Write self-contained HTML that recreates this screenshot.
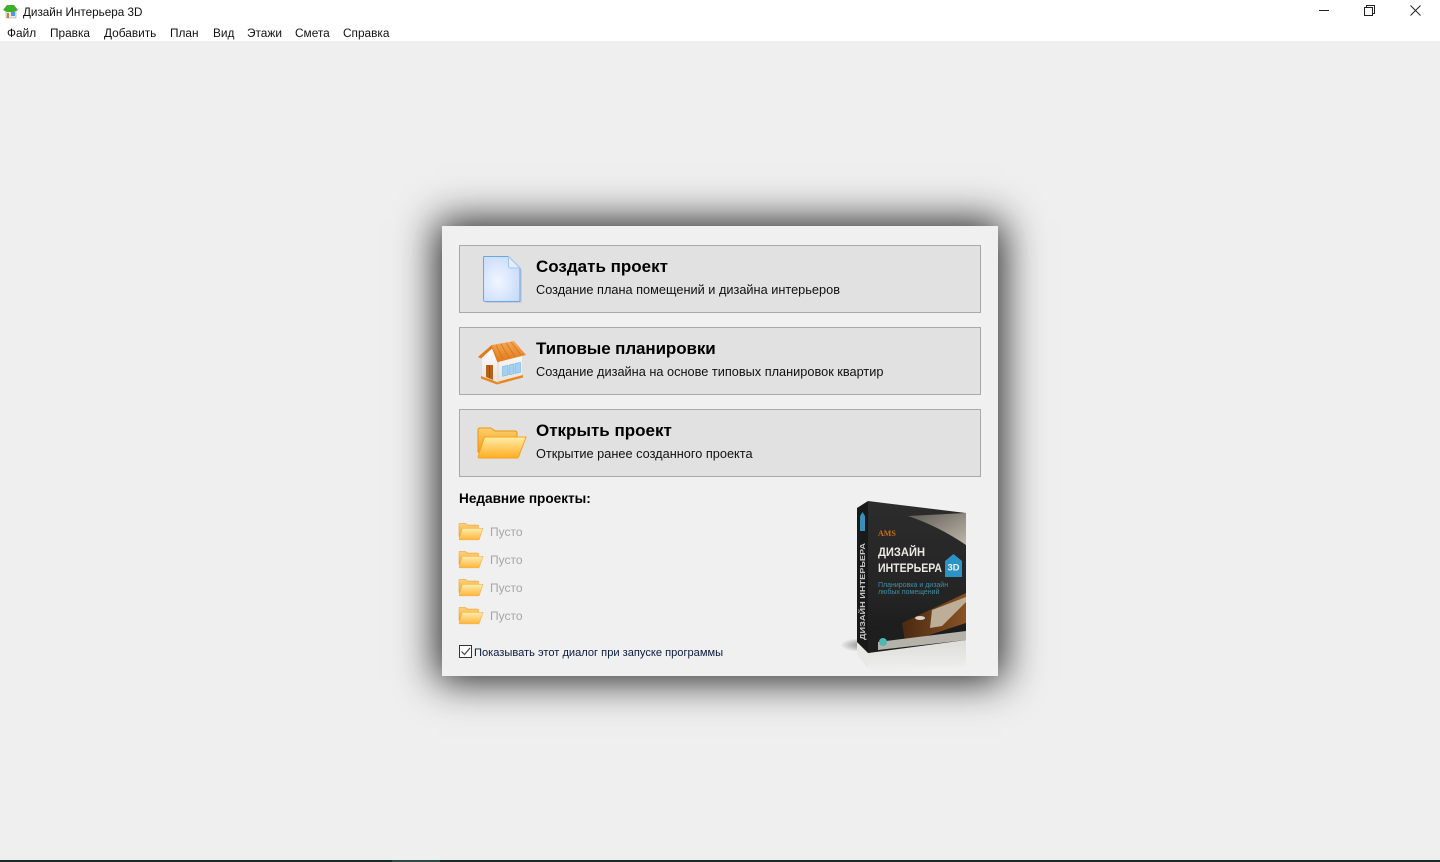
<!DOCTYPE html>
<html lang="ru"><head><meta charset="utf-8"><title>Дизайн Интерьера 3D</title>
<style>
html,body{margin:0;padding:0;width:1440px;height:862px;overflow:hidden;background:#efefef;font-family:"Liberation Sans",sans-serif;color:#000}
.t{position:absolute;white-space:nowrap;line-height:16px}
#top{position:absolute;left:0;top:0;width:1440px;height:41px;background:#fff}
#dlg{position:absolute;left:442px;top:226px;width:556px;height:450px;background:#f0f0f0;box-shadow:0 0 38px 5px rgba(0,0,0,.85)}
.btn{position:absolute;left:459px;width:520px;height:66px;background:#e1e1e1;border:1px solid #a9a9a9}
.h{font-weight:bold;font-size:17px;left:536px}
.s{font-size:12.75px;left:536px;color:#111}
.m{font-size:11.85px;top:25px;color:#111}
.e{font-size:12px;left:490px;color:#a5a5a5}
svg{position:absolute;left:0;top:0}
#bar{position:absolute;left:0;top:860px;width:1440px;height:2px;background:#1a2a26}
#seg{position:absolute;left:392px;top:860px;width:48px;height:2px;background:#2f4a46}
</style></head><body>
<div id="top"></div>
<div class="t" style="left:23px;top:5px;font-size:11.7px;color:#111">Дизайн Интерьера 3D</div>
<div class="t m" style="left:7px">Файл</div>
<div class="t m" style="left:50px">Правка</div>
<div class="t m" style="left:104px">Добавить</div>
<div class="t m" style="left:170px">План</div>
<div class="t m" style="left:213px">Вид</div>
<div class="t m" style="left:247px">Этажи</div>
<div class="t m" style="left:295px">Смета</div>
<div class="t m" style="left:343px">Справка</div>
<div id="dlg"></div>
<div class="btn" style="top:245px"></div>
<div class="btn" style="top:327px"></div>
<div class="btn" style="top:409px"></div>
<div class="t h" style="top:259px">Создать проект</div>
<div class="t s" style="top:282px">Создание плана помещений и дизайна интерьеров</div>
<div class="t h" style="top:341px;letter-spacing:-.1px">Типовые планировки</div>
<div class="t s" style="top:364px">Создание дизайна на основе типовых планировок квартир</div>
<div class="t h" style="top:423px">Открыть проект</div>
<div class="t s" style="top:446px">Открытие ранее созданного проекта</div>
<div class="t" style="left:459px;top:491px;font-size:13.6px;font-weight:bold">Недавние проекты:</div>
<div class="t e" style="top:524px">Пусто</div>
<div class="t e" style="top:552px">Пусто</div>
<div class="t e" style="top:580px">Пусто</div>
<div class="t e" style="top:608px">Пусто</div>
<div class="t" style="left:474px;top:645px;font-size:11.1px;color:#0b1a3c">Показывать этот диалог при запуске программы</div>
<svg width="1440" height="862" viewBox="0 0 1440 862">
<defs>
<radialGradient id="doc" cx=".4" cy=".55" r=".7"><stop offset="0" stop-color="#f2f6ff"/><stop offset="1" stop-color="#c4d9fb"/></radialGradient>
<linearGradient id="roof" x1="0" y1="0" x2="0" y2="1"><stop offset="0" stop-color="#f4a95a"/><stop offset="1" stop-color="#e27a18"/></linearGradient>
<linearGradient id="wall" x1="0" y1="0" x2="0" y2="1"><stop offset="0" stop-color="#ffffff"/><stop offset="1" stop-color="#e6e2dc"/></linearGradient>
<linearGradient id="fb" x1="0" y1="0" x2="0" y2="1"><stop offset="0" stop-color="#ffcf6e"/><stop offset="1" stop-color="#f59c14"/></linearGradient>
<linearGradient id="ff" x1="0" y1="0" x2="0" y2="1"><stop offset="0" stop-color="#ffeea8"/><stop offset="1" stop-color="#ffad22"/></linearGradient>
<linearGradient id="boxf" x1="0" y1="0" x2="0" y2="1"><stop offset="0" stop-color="#2c2c2c"/><stop offset=".62" stop-color="#242424"/><stop offset="1" stop-color="#181818"/></linearGradient>
<linearGradient id="refl" x1="0" y1="0" x2="0" y2="1"><stop offset="0" stop-color="#dcdcd8"/><stop offset="1" stop-color="#f0f0f0"/></linearGradient>
<linearGradient id="tbl" x1="0" y1="0" x2="1" y2="0"><stop offset="0" stop-color="#4a2a10"/><stop offset="1" stop-color="#8a5224"/></linearGradient>
<linearGradient id="ceil" x1="0" y1="0" x2="1" y2="1"><stop offset="0" stop-color="#5e5a54"/><stop offset="1" stop-color="#bfb8aa"/></linearGradient>
<radialGradient id="sh" cx=".8" cy=".5" r=".6"><stop offset="0" stop-color="#555" stop-opacity=".7"/><stop offset="1" stop-color="#555" stop-opacity="0"/></radialGradient>
<g id="folder">
<path d="M480 428H491L495 431H515Q517 431 517 433V452H478V430Q478 428 480 428Z" fill="url(#fb)" stroke="#ee9410" stroke-width="1"/>
<path d="M484.500 437H526L518.500 457Q518 458 516 458H479Q478 458 478.300 456Z" fill="url(#ff)" stroke="#f5a21c" stroke-width="1"/>
</g>
</defs>
<!-- title icon -->
<path d="M6 10H16V18H6Z" fill="#ecece4" stroke="#a09e94" stroke-width=".6"/>
<path d="M3 10L7 5H14L18 10L14 12H7Z" fill="#3fae2a"/>
<path d="M11 12H15V16H11Z" fill="#5b93d8"/><path d="M7 13H9V18H7Z" fill="#c8842a"/>
<!-- window controls -->
<path d="M1319 10.500H1329" stroke="#222" stroke-width="1"/>
<path d="M1364.500 7.500H1372.500V15.500H1364.500Z M1366.500 7.500V5.500H1374.500V13.500H1372.500" fill="none" stroke="#222" stroke-width="1"/>
<path d="M1410.500 5.500L1420.500 15.500M1420.500 5.500L1410.500 15.500" stroke="#222" stroke-width="1"/>
<!-- document -->
<path d="M486 259H510L522 270V303H486Z" fill="#c4c4c4" opacity=".7"/>
<path d="M484 256.500H508.500L520 268V300Q520 301.500 518.500 301.500H485.500Q483.500 301.500 483.500 300V257Q483.500 256.500 484 256.500Z" fill="url(#doc)" stroke="#63a9ee" stroke-width="1"/>
<path d="M508.500 256.500V266Q508.500 268 510.500 268H520Z" fill="#e4ecf8" stroke="#a4c6ea" stroke-width="1"/>
<!-- house -->
<path d="M482 358L492 347L498 362L522 356V376L497 383L482 377Z" fill="url(#wall)"/>
<path d="M481 376L497 382L523 375V377.500L497 384.500L481 378.500Z" fill="#e8861c"/>
<path d="M498 362V383" stroke="#d8d4cc" stroke-width=".8"/>
<path d="M486 365H493V380L486 377Z" fill="#b5621a"/>
<path d="M489.500 366V378" stroke="#7a4010" stroke-width=".6"/>
<path d="M502.500 366.500L508 365.300V375L502.500 376.300Z M509 365L514 363.800V373.800L509 374.800Z M515 363.500L520.500 362.300V372.300L515 373.500Z" fill="#9fd2f6" stroke="#5c9fd4" stroke-width=".4"/>
<path d="M491.700 345L514 341L526 355L498 362Z" fill="url(#roof)"/>
<path d="M496 345L503 359M501 344L509 358M506 343L515 356.500M511 342L521 355" stroke="#c96c10" stroke-width=".8" opacity=".75"/>
<path d="M491.700 345L478 357L481 358.500L492 348.500L497.500 362.500L499 362Z" fill="#e27a18"/>
<!-- open folder -->
<use href="#folder"/>
<!-- small folders -->
<g opacity=".88">
<use href="#folder" transform="translate(220,288) scale(.5,.55)"/>
<use href="#folder" transform="translate(220,316) scale(.5,.55)"/>
<use href="#folder" transform="translate(220,344) scale(.5,.55)"/>
<use href="#folder" transform="translate(220,372) scale(.5,.55)"/>
</g>
<!-- checkbox -->
<rect x="459.500" y="645.500" width="12" height="12" fill="#fff" stroke="#333" stroke-width="1"/>
<path d="M461.500 651.500L464.500 654.500L470 648" fill="none" stroke="#444" stroke-width="1.200"/>
<!-- box -->
<ellipse cx="852" cy="645" rx="20" ry="6" fill="url(#sh)"/>
<path d="M868 653L966 640V666L868 672Z" fill="url(#refl)"/>
<path d="M857 642L868 653V668L857 655Z" fill="#e8e8e5"/>
<path d="M857 508L868 501V653L857 642Z" fill="#17191b"/>
<path d="M868 501L966 513V640L868 653Z" fill="url(#boxf)"/>
<path d="M908 516L966 513V545Q938 526 908 516Z" fill="url(#ceil)"/>
<path d="M902 623L966 593V623L905 643Z" fill="url(#tbl)"/>
<path d="M932 610L966 597V602L942 626L930 628Z" fill="#bdae98"/>
<path d="M920 616a5 2 0 1 0 .1 0Z" fill="#d8d4cc"/>
<path d="M868 632L902 624V648L868 653Z" fill="#1e1e1e"/>
<path d="M878 642L966 631V640L878 650Z" fill="#b5b2aa"/>
<circle cx="883" cy="642" r="4" fill="#4bb8b4"/>
<path d="M860 516L862.500 512L865 516V531H860Z" fill="#3a8fb4"/>
<path d="M945 561L953.500 554L962 561V577H945Z" fill="#2b93c6"/>
<text x="947.500" y="570.500" font-family="Liberation Sans" font-size="9.500" font-weight="bold" fill="#e9f3f8" textLength="12" lengthAdjust="spacingAndGlyphs">3D</text>
<text x="878" y="556" font-family="Liberation Sans" font-size="12" font-weight="bold" fill="#ece9e4" textLength="47" lengthAdjust="spacingAndGlyphs">ДИЗАЙН</text>
<text x="878" y="572" font-family="Liberation Sans" font-size="12" font-weight="bold" fill="#ece9e4" textLength="64" lengthAdjust="spacingAndGlyphs">ИНТЕРЬЕРА</text>
<text x="878" y="587" font-family="Liberation Sans" font-size="7" fill="#3f8fa6">Планировка и дизайн</text>
<text x="878" y="594" font-family="Liberation Sans" font-size="7" fill="#3f8fa6">любых помещений</text>
<text x="878" y="536" font-family="Liberation Serif" font-size="8" font-weight="bold" fill="#c8701e">AMS</text>
<text transform="translate(865,640) rotate(-90)" font-family="Liberation Sans" font-size="7.500" font-weight="bold" fill="#c4c4c4" textLength="97" lengthAdjust="spacingAndGlyphs">ДИЗАЙН ИНТЕРЬЕРА</text>
</svg>
<div id="bar"></div><div id="seg"></div>
</body></html>
